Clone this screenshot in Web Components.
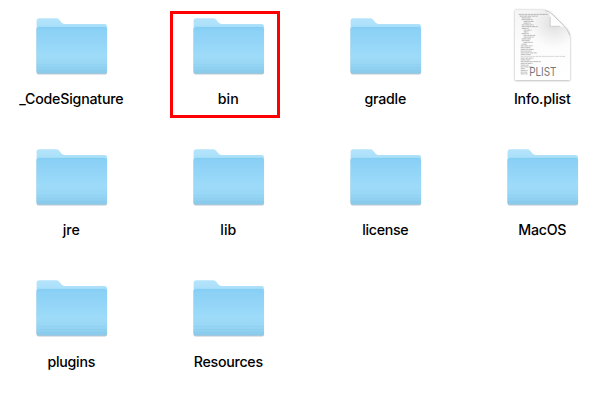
<!DOCTYPE html>
<html lang="en">
<head>
<meta charset="utf-8">
<title>Contents</title>
<style>html,body{margin:0;background:#fff;height:404px;overflow:hidden}</style>
</head>
<body>
<finder-window>
  <finder-item name="_CodeSignature"></finder-item>
  <finder-item name="bin" marked></finder-item>
  <finder-item name="gradle"></finder-item>
  <finder-item name="Info.plist" kind="plist"></finder-item>
  <finder-item name="jre"></finder-item>
  <finder-item name="lib"></finder-item>
  <finder-item name="license"></finder-item>
  <finder-item name="MacOS"></finder-item>
  <finder-item name="plugins"></finder-item>
  <finder-item name="Resources"></finder-item>
</finder-window>
<script>
class FinderWindow extends HTMLElement {
  constructor() {
    super();
    this.attachShadow({mode: 'open'}).innerHTML = `
      <style>
        :host{display:grid;grid-template-columns:repeat(4,114px);grid-auto-rows:131.200px;column-gap:43px;
          padding-left:14px;width:600px;height:404px;box-sizing:border-box;overflow:hidden;
          font:500 14.2px/20px Inter,"Liberation Sans",sans-serif;color:#000}
      </style><slot></slot>`;
  }
}
class FolderIcon extends HTMLElement {
  constructor() {
    super();
    this.attachShadow({mode: 'open'}).innerHTML = `
      <style>:host{display:block;width:80px;height:80px}svg{display:block}</style>
      <svg width="80" height="80" viewBox="0 0 80 80">
        <defs>
          <linearGradient id="b" x1="0" y1="0" x2="0" y2="1"><stop offset="0" stop-color="#b5e4fc"/><stop offset=".18" stop-color="#a9dff9"/></linearGradient>
          <linearGradient id="f" x1="0" y1="0" x2="0" y2="1"><stop offset="0" stop-color="#88cff5"/><stop offset=".1" stop-color="#8cd1f6"/><stop offset=".62" stop-color="#9edbf9"/><stop offset=".8" stop-color="#98d6f5"/><stop offset="1" stop-color="#88c9ea"/></linearGradient>
          <filter id="s" x="-10%" y="-10%" width="120%" height="125%"><feGaussianBlur stdDeviation=".7"/></filter>
        </defs>
        <path d="M5.500 28H76.100V72.500Q76.100 74.400 74.100 74.400H7.500Q5.500 74.400 5.500 72.500Z" fill="#7890a0" opacity=".5" filter="url(#s)"/>
        <path d="M5.600 21Q5.600 18.300 8.300 18.300H25Q27 18.300 28.200 19.700L30.700 22.800Q31.600 23.900 33.500 23.900H73.500Q76 23.900 76 26.400V71H5.600Z" fill="url(#b)"/>
        <path d="M5.600 29.200Q5.600 27 7.800 27H73.800Q76 27 76 29.200V71.500Q76 73.500 73.800 73.500H7.800Q5.600 73.500 5.600 71.500Z" fill="url(#f)"/>
        <path d="M7.300 27.300H74.300" stroke="#7fc9f0" stroke-width=".6"/>
        <path d="M5.600 64.500H76M5.600 67.500H76M5.600 70.500H76" stroke="#83c6ea" stroke-width=".7" opacity=".4"/>
      </svg>`;
  }
}
class PlistIcon extends HTMLElement {
  constructor() {
    super();
    const rows = [[0,30],[1,19],[3,10],[3,12],[5,11],[5,8],[3,13],[3,17],[3,8],[5,9],[5,6],[3,8],[5,13],[5,11],[3,10],[3,9],[5,10],[3,6],[2,13],[2,11],[2,14],[2,12],[2,17],[2,11],[2,46],[2,14],[2,11],[2,21],[2,13],[2,9],[2,13],[2,5],[2,8],[2,8],[2,8]];
    const lines = rows.map(([x, w], i) => `<path d="M${15.7 + x} ${14.4 + i * 1.75}h${w - 1}" stroke-dasharray="${i % 3 + 3} .5 ${i % 4 + 2} .4"${i === 24 ? ' opacity=".6"' : ''}/>`).join('');
    this.attachShadow({mode: 'open'}).innerHTML = `
      <style>:host{display:block;width:80px;height:80px;position:relative;left:.5px}svg{display:block;overflow:visible}text{font:400 11.3px Inter,sans-serif}</style>
      <svg width="80" height="80" viewBox="0 0 80 80">
        <defs>
          <linearGradient id="p" x1="0" y1="0" x2="0" y2="1"><stop offset="0" stop-color="#f5f5f5"/><stop offset=".5" stop-color="#fcfcfc"/><stop offset="1" stop-color="#fff"/></linearGradient>
          <linearGradient id="c" gradientUnits="userSpaceOnUse" x1="48" y1="27" x2="58" y2="17"><stop offset="0" stop-color="#fff"/><stop offset=".65" stop-color="#fdfdfd"/><stop offset="1" stop-color="#e0e0e0"/></linearGradient>
          <radialGradient id="g" gradientUnits="userSpaceOnUse" cx="51" cy="24" r="24"><stop offset="0" stop-color="#cfcfcf"/><stop offset="1" stop-color="#ddd" stop-opacity="0"/></radialGradient>
          <filter id="s" x="-10%" y="-10%" width="120%" height="120%"><feGaussianBlur stdDeviation=".8"/></filter>
          <clipPath id="k"><path d="M12 10H38Q45 10 50 15L60.500 25.500Q67 32 67 38.500V80H12Z"/></clipPath>
        </defs>
        <path d="M12 10.300H38Q45 10.300 50 15.300L60.500 25.800Q67 32 67 38.500V80.600H12Z" fill="#777" opacity=".65" filter="url(#s)"/>
        <g clip-path="url(#k)">
          <path d="M12 10H67V80H12Z" fill="url(#p)"/>
          <path d="M12 10H67V80H12Z" fill="url(#g)" opacity=".65"/>
        </g>
        <g stroke="#666" stroke-width=".85" opacity=".5">${lines}</g>
        <path d="M42 10.500Q47.300 11.500 47.300 18V26.300H57Q64 26.300 66.500 35Q65.500 30.500 60.500 25.500L50 15Q46 11 42 10.500Z" fill="url(#c)"/>
        <path d="M47.300 17V26.300H57" fill="none" stroke="#b8b8b8" stroke-width=".6"/>
        <path d="M42 10.500Q46 11 50 15L60.500 25.500Q65.500 30.500 66.500 35" fill="none" stroke="#b5b5b5" stroke-width=".6"/>
        <text x="26.200" y="75.700" fill="#777" textLength="27.300" lengthAdjust="spacingAndGlyphs">PLIST</text>
      </svg>`;
  }
}
class FinderItem extends HTMLElement {
  connectedCallback() {
    const spacing = {'_CodeSignature': -.2, 'Info.plist': -.2, 'Resources': -.28, 'plugins': -.25, 'license': -.3, 'gradle': -.25, 'MacOS': -.25};
    const name = this.getAttribute('name');
    const icon = this.getAttribute('kind') === 'plist' ? 'plist-icon' : 'folder-icon';
    this.attachShadow({mode: 'open'}).innerHTML = `
      <style>
        :host{display:flex;flex-direction:column;align-items:center;gap:9.200px;position:relative}
        span{white-space:nowrap;padding-left:.6px;letter-spacing:${spacing[name] || 0}px}
        i{position:absolute;left:-1px;top:11px;width:110px;height:107px;box-sizing:border-box;border:3px solid #fe0000}
      </style>
      <${icon}></${icon}><span>${name}</span>${this.hasAttribute('marked') ? '<i></i>' : ''}`;
  }
}
customElements.define('folder-icon', FolderIcon);
customElements.define('plist-icon', PlistIcon);
customElements.define('finder-item', FinderItem);
customElements.define('finder-window', FinderWindow);
</script>
</body>
</html>
